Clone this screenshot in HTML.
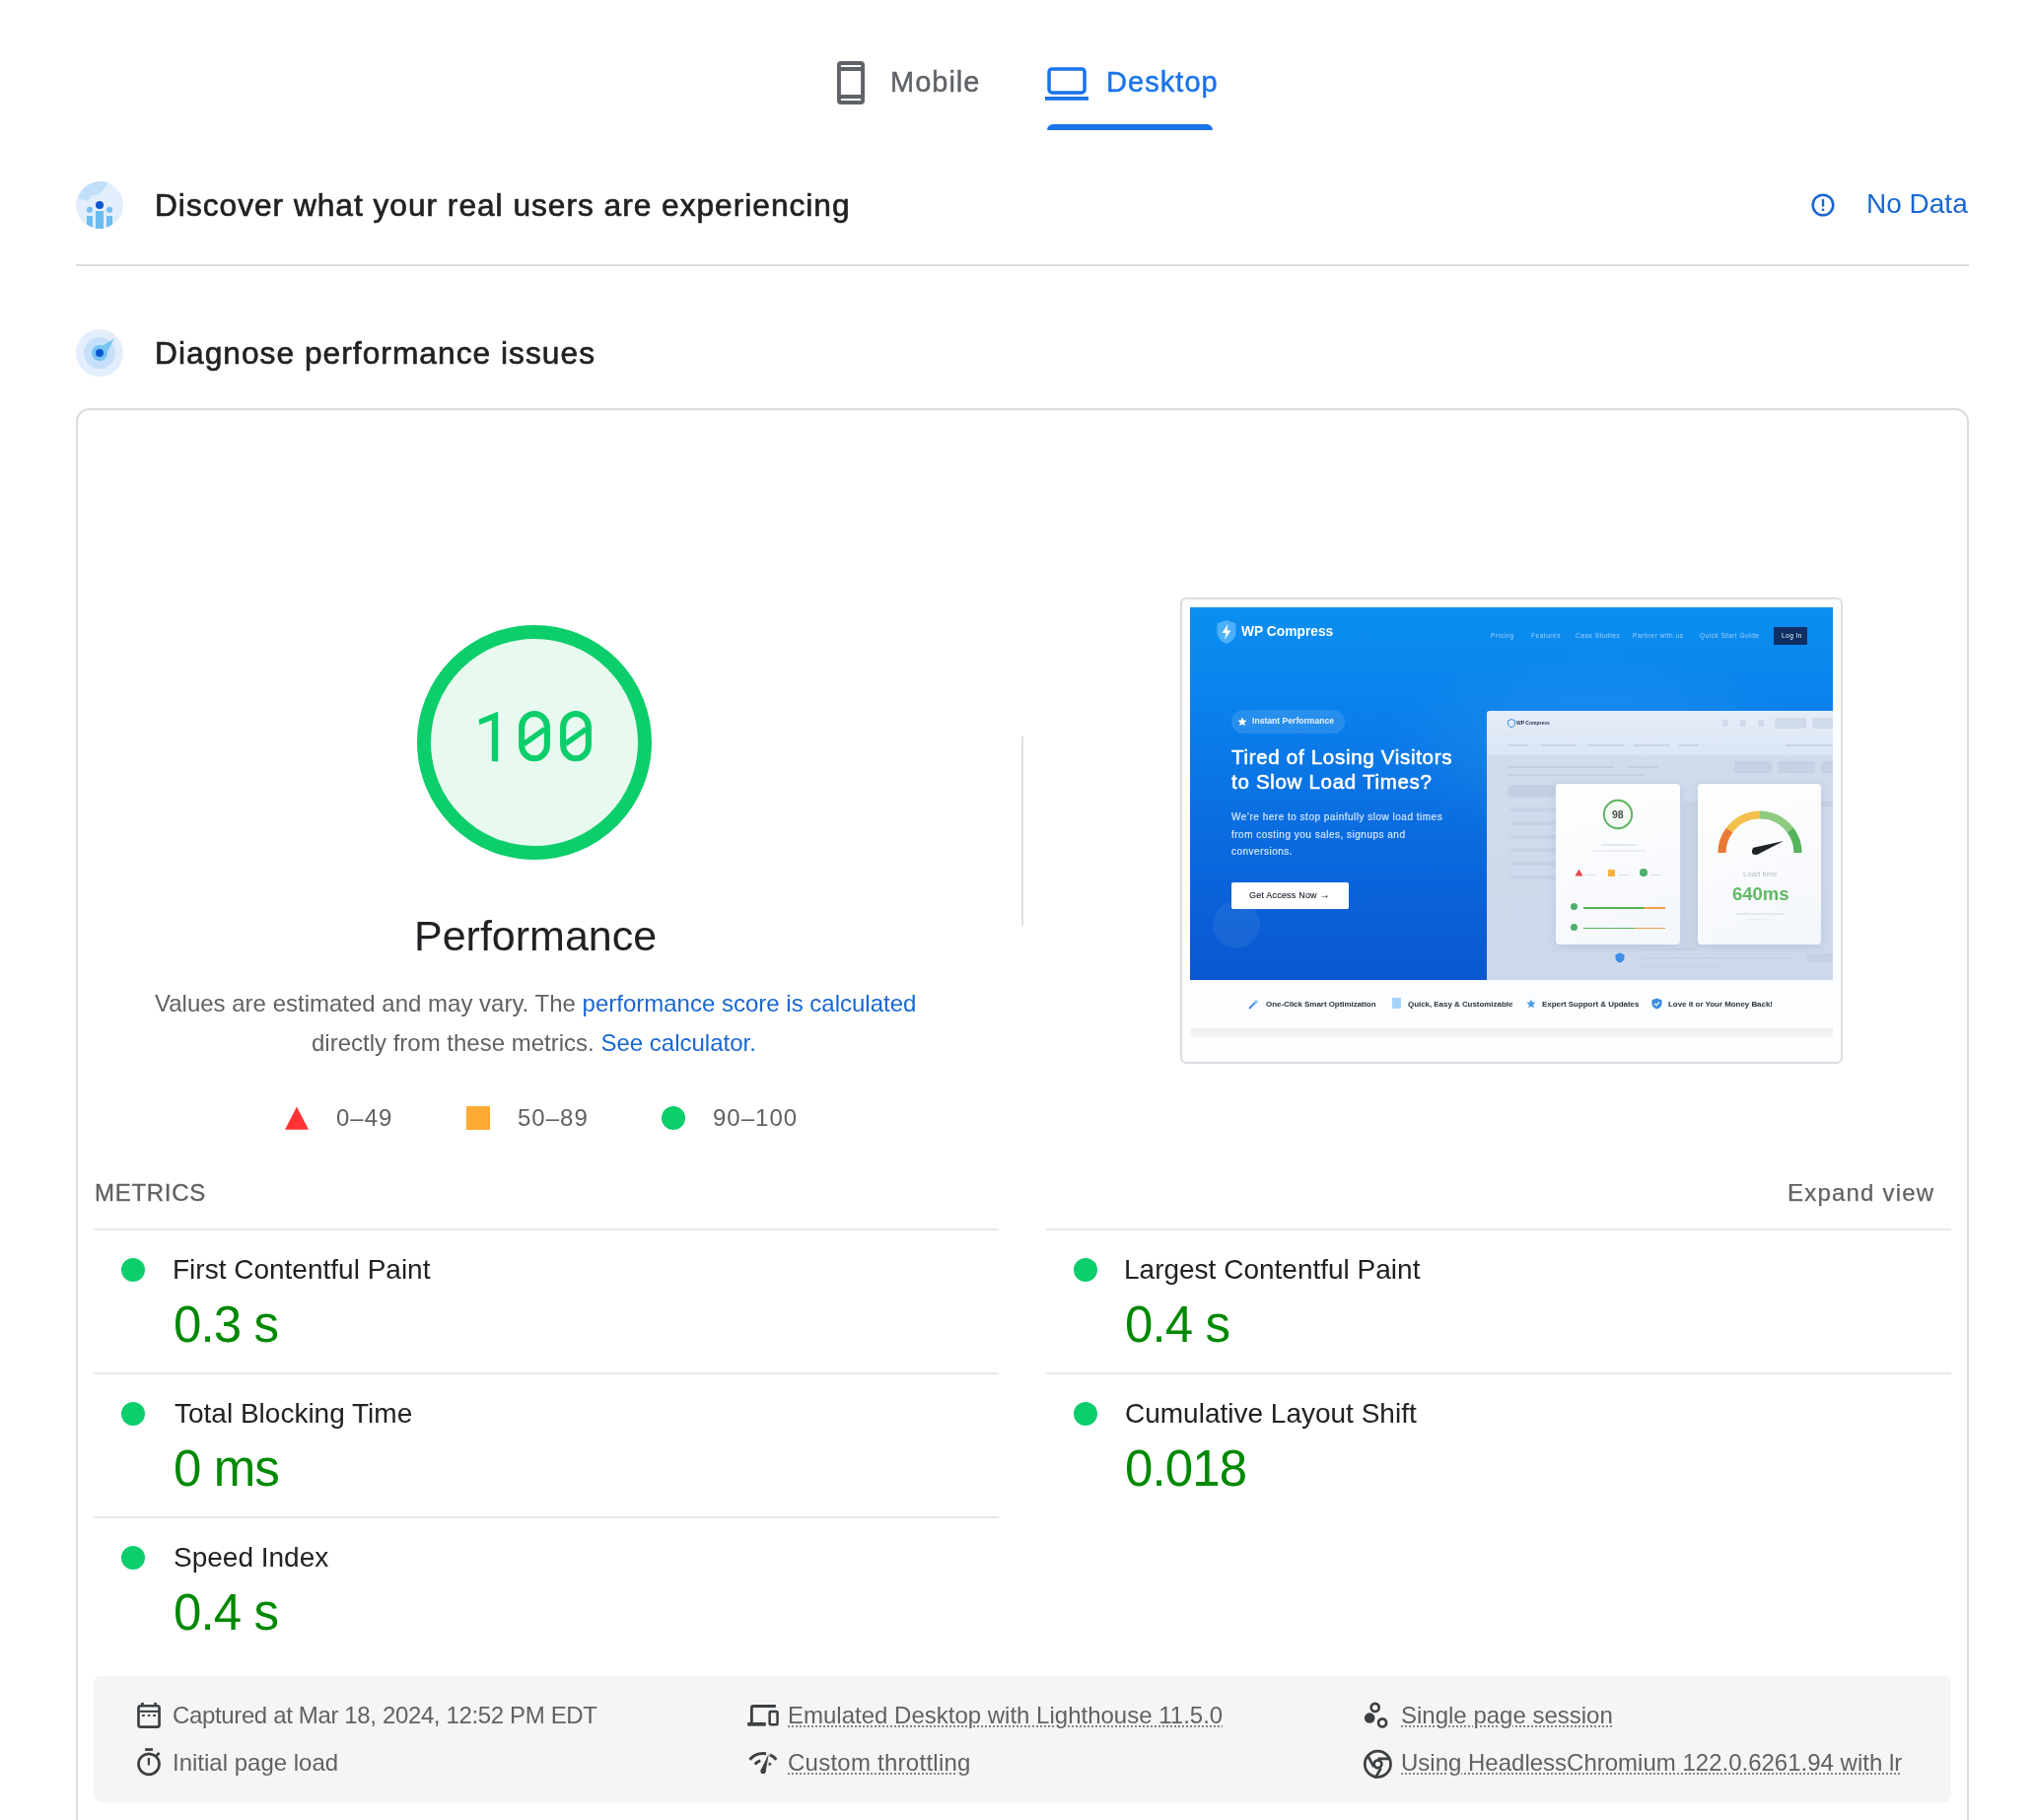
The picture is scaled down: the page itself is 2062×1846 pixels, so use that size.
<!DOCTYPE html>
<html>
<head>
<meta charset="utf-8">
<title>PageSpeed Insights</title>
<style>
html,body{margin:0;padding:0;background:#fff;}
body{width:2062px;height:1846px;position:relative;overflow:hidden;font-family:"Liberation Sans",sans-serif;}
.a{position:absolute;}
.t{position:absolute;white-space:nowrap;line-height:1;will-change:transform;}
.dot{position:absolute;width:24px;height:24px;border-radius:50%;background:#0cce6b;}
.hr{position:absolute;height:2px;background:#e8e8e8;}
.ul{text-decoration:underline dotted #858585;text-underline-offset:2px;text-decoration-thickness:2px;}
.th{position:absolute;white-space:nowrap;line-height:1;font-family:"Liberation Sans",sans-serif;will-change:transform;}
</style>
</head>
<body>
<!-- Tabs -->
<svg class="a" style="left:847px;top:60px" width="32" height="48" viewBox="0 0 32 48">
  <path fill-rule="evenodd" fill="#5f6368" d="M6 2 H26 Q30 2 30 6 V42 Q30 46 26 46 H6 Q2 46 2 42 V6 Q2 2 6 2 Z M5.9 5.9 V8 H26.1 V5.9 Z M5.9 12 V36 H26.1 V12 Z M5.9 40 V42.1 H26.1 V40 Z"/>
</svg>
<svg class="a" style="left:1058px;top:66px" width="48" height="38" viewBox="0 0 48 38">
  <rect x="6.05" y="3.95" width="36" height="24" rx="3" fill="none" stroke="#1a73e8" stroke-width="3.5"/>
  <rect x="2" y="32" width="44" height="3.8" fill="#1a73e8"/>
</svg>
<div class="a" style="left:1062px;top:126px;width:168px;height:6px;background:#1a73e8;border-radius:6px 6px 0 0;"></div>

<!-- Discover icon -->
<svg class="a" style="left:77px;top:184px" width="48" height="48" viewBox="0 0 48 48">
  <circle cx="24" cy="24" r="24" fill="#e3eefc"/>
  <path d="M2 17 A24 24 0 0 1 33 1.5 L30 6 L22 14 L16 14 L12 20 Z" fill="#c2dffa"/>
  <circle cx="24" cy="24" r="4" fill="#0b57d0"/>
  <circle cx="14" cy="28.8" r="3" fill="#70c2f2"/>
  <circle cx="34" cy="28.8" r="3" fill="#70c2f2"/>
  <path d="M20 30 h8 v18 h-8z" fill="#6bbdf0"/>
  <path d="M11 35 h6 v11.6 a24 24 0 0 1 -6 -3.2z" fill="#6bbdf0"/>
  <path d="M31 35 h6 v8.4 a24 24 0 0 1 -6 3.2z" fill="#6bbdf0"/>
</svg>
<!-- No data icon -->
<svg class="a" style="left:1836px;top:195px" width="26" height="26" viewBox="0 0 26 26">
  <circle cx="13" cy="13" r="10.3" fill="none" stroke="#1967d2" stroke-width="2.5"/>
  <rect x="11.8" y="7" width="2.4" height="7.6" fill="#1967d2"/>
  <rect x="11.8" y="16.6" width="2.4" height="2.4" fill="#1967d2"/>
</svg>
<div class="a" style="left:77px;top:268px;width:1920px;height:2px;background:#dadce0;"></div>

<!-- Diagnose icon -->
<svg class="a" style="left:77px;top:334px" width="48" height="48" viewBox="0 0 48 48">
  <circle cx="24" cy="24" r="24" fill="#e3eefc"/>
  <circle cx="24" cy="24" r="16" fill="#c6e0fb"/>
  <path d="M20 21 L38.8 9.5 L29 28 Z" fill="#74c4f2"/>
  <circle cx="24" cy="24" r="8" fill="#74c4f2"/>
  <circle cx="24" cy="24" r="4" fill="#0b57d0"/>
</svg>

<!-- Card -->
<div class="a" style="left:77px;top:414px;width:1916px;height:1600px;border:2px solid #dadce0;border-radius:14px;"></div>

<!-- Gauge -->
<svg class="a" style="left:400px;top:611px" width="284" height="284" viewBox="400 611 284 284">
  <circle cx="542" cy="753" r="112" fill="#e8f9ef" stroke="#0cce6b" stroke-width="14"/>
  <g fill="#0cce6b">
    <path d="M485.7 729.8 L503.6 722.2 L505.1 722.2 L505.1 772.2 L498.8 772.2 L498.8 730.4 L486.2 735.2 Z"/>
  </g>
  <g fill="none" stroke="#0cce6b">
    <rect x="529.1" y="724" width="25.8" height="45.3" rx="12.9" ry="13.5" stroke-width="6.1"/>
    <rect x="571.1" y="724" width="25.8" height="45.3" rx="12.9" ry="13.5" stroke-width="6.1"/>
    <path d="M531.5 754.5 L552.5 739.5 M573.5 754.5 L594.5 739.5" stroke-width="5.4"/>
  </g>
</svg>

<!-- Legend -->
<svg class="a" style="left:289px;top:1122px" width="24" height="24" viewBox="0 0 24 24"><path d="M12 0.5 L24 23.8 L0 23.8Z" fill="#ff3333"/></svg>
<div class="a" style="left:473px;top:1122px;width:24px;height:24px;background:#ffaa33;"></div>
<div class="a" style="left:671px;top:1122px;width:24px;height:24px;border-radius:50%;background:#0cce6b;"></div>

<div class="a" style="left:1036px;top:747px;width:2px;height:192px;background:#e0e0e0;"></div>

<!-- Screenshot thumbnail -->
<div class="a" style="left:1197px;top:606px;width:668px;height:469px;border:2px solid #dadce0;border-radius:6px;background:#fdfeff;"></div>
<div class="a" style="left:1207px;top:616px;width:652px;height:455px;overflow:hidden;">
  <!-- hero -->
  <div class="a" style="left:0;top:0;width:652px;height:378px;background:linear-gradient(180deg,#0b8ff0 0%,#0a82ec 25%,#0a72e3 50%,#0a63da 75%,#0a57d0 100%);"></div>
  <div class="a" style="left:200px;top:40px;width:420px;height:200px;border-radius:50%;background:radial-gradient(closest-side,rgba(120,200,255,0.18),rgba(120,200,255,0));"></div>
  <div class="a" style="left:23px;top:298px;width:48px;height:48px;border-radius:50%;background:rgba(255,255,255,0.06);"></div>
  <!-- logo -->
  <svg class="a" style="left:26px;top:12px" width="22" height="26" viewBox="0 0 22 26">
    <path d="M11 1 L20.5 4.5 V13 C20.5 19 16 23 11 25 C6 23 1.5 19 1.5 13 V4.5 Z" fill="#4db0fb"/>
    <path d="M12.5 5 L6.5 14 H10.5 L9 21 L15.5 11.5 H11.5 Z" fill="#ffffff"/>
  </svg>
  <div class="th" style="left:51.5px;top:18px;font-size:13.8px;font-weight:bold;color:#ffffff;letter-spacing:0px;">WP Compress</div>
  <!-- nav -->
  <div class="th" style="left:305px;top:26px;font-size:6.6px;color:#a3cffb;letter-spacing:0.5px;">Pricing</div>
  <div class="th" style="left:345.5px;top:26px;font-size:6.6px;color:#a3cffb;letter-spacing:0.5px;">Features</div>
  <div class="th" style="left:390.5px;top:26px;font-size:6.6px;color:#a3cffb;letter-spacing:0.5px;">Case Studies</div>
  <div class="th" style="left:449.4px;top:26px;font-size:6.6px;color:#a3cffb;letter-spacing:0.5px;">Partner with us</div>
  <div class="th" style="left:517px;top:26px;font-size:6.6px;color:#a3cffb;letter-spacing:0.5px;">Quick Start Guide</div>
  <div class="a" style="left:592px;top:20px;width:34px;height:18px;background:#0f2f62;border-radius:1px;"></div>
  <div class="th" style="left:600px;top:25.5px;font-size:6.6px;color:#e8f0ff;letter-spacing:0.4px;">Log In</div>
  <!-- pill -->
  <div class="a" style="left:42px;top:104px;width:115px;height:24px;border-radius:12px;background:rgba(255,255,255,0.12);"></div>
  <svg class="a" style="left:48px;top:111px" width="10" height="10" viewBox="0 0 10 10"><path d="M5 0.5 L6.3 3.6 L9.6 3.8 L7.1 6 L7.9 9.3 L5 7.5 L2.1 9.3 L2.9 6 L0.4 3.8 L3.7 3.6Z" fill="#fff"/></svg>
  <div class="th" style="left:62.5px;top:110.5px;font-size:8.6px;font-weight:bold;color:#eaf4ff;">Instant Performance</div>
  <!-- heading -->
  <div class="th" style="left:41.5px;top:140px;font-size:20.5px;font-weight:normal;-webkit-text-stroke:0.6px #fff;color:#ffffff;line-height:24.6px;letter-spacing:0.7px;">Tired of Losing Visitors<br>to Slow Load Times?</div>
  <div class="th" style="left:42px;top:204px;font-size:10px;color:#d7e9ff;line-height:17.6px;letter-spacing:0.5px;-webkit-text-stroke:0.15px #d7e9ff;">We’re here to stop painfully slow load times<br>from costing you sales, signups and<br>conversions.</div>
  <!-- button -->
  <div class="a" style="left:42px;top:279px;width:119px;height:27px;background:#ffffff;border-radius:2px;"></div>
  <div class="th" style="left:59.5px;top:286.5px;font-size:9px;color:#1d2433;letter-spacing:0.2px;-webkit-text-stroke:0.15px #1d2433;">Get Access Now <b style="font-size:10px">→</b></div>

  <!-- dashboard -->
  <div class="a" style="left:301px;top:105px;width:351px;height:273px;background:linear-gradient(180deg,#e5edf9 0%,#dbe5f3 16%,#d0dbec 17%,#cdd8ea 100%);border-radius:3px 0 0 0;"></div>
  <svg class="a" style="left:322px;top:113px" width="8" height="9" viewBox="0 0 8 9"><path d="M4 0.5 L7.5 2 V5 C7.5 7 6 8 4 8.7 C2 8 0.5 7 0.5 5 V2Z" fill="none" stroke="#3a8ee8" stroke-width="1"/></svg>
  <div class="th" style="left:331px;top:114.5px;font-size:5px;font-weight:bold;color:#2a3550;">WP Compress</div>
  <div class="a" style="left:539.5px;top:114px;width:6px;height:7px;background:#d1dbe9;border-radius:1px;"></div>
  <div class="a" style="left:557.5px;top:114px;width:6px;height:7px;background:#d1dbe9;border-radius:1px;"></div>
  <div class="a" style="left:575.5px;top:114px;width:6px;height:7px;background:#d1dbe9;border-radius:1px;"></div>
  <div class="a" style="left:593px;top:112px;width:32px;height:11px;background:#d0dae8;border-radius:3px;"></div>
  <div class="a" style="left:631px;top:112px;width:25px;height:11px;background:#d0dae8;border-radius:3px;"></div>
  <div class="a" style="left:323px;top:138.5px;width:20px;height:2px;background:#c9d4e4;"></div>
  <div class="a" style="left:356px;top:138.5px;width:36px;height:2px;background:#c9d4e4;"></div>
  <div class="a" style="left:403px;top:138.5px;width:37px;height:2px;background:#c9d4e4;"></div>
  <div class="a" style="left:450px;top:138.5px;width:36px;height:2px;background:#c9d4e4;"></div>
  <div class="a" style="left:496px;top:138.5px;width:20px;height:2px;background:#c9d4e4;"></div>
  <div class="a" style="left:604px;top:138.5px;width:48px;height:2px;background:#c9d4e4;"></div>
  <div class="a" style="left:323px;top:161px;width:107px;height:2px;background:#c3cfe1;"></div>
  <div class="a" style="left:445px;top:161px;width:30px;height:2px;background:#c3cfe1;"></div>
  <div class="a" style="left:323px;top:169px;width:137px;height:2px;background:#c3cfe1;"></div>
  <div class="a" style="left:552px;top:156px;width:38px;height:12px;background:#c6d2e4;border-radius:2px;"></div>
  <div class="a" style="left:596px;top:156px;width:38px;height:12px;background:#c6d2e4;border-radius:2px;"></div>
  <div class="a" style="left:640px;top:156px;width:14px;height:12px;background:#c6d2e4;border-radius:2px;"></div>
  <div class="a" style="left:322px;top:180px;width:50px;height:13px;background:#c3cfe1;border-radius:6px;"></div>
  <div class="a" style="left:325px;top:203px;width:47px;height:4px;background:#c6d2e4;border-radius:2px;"></div>
  <div class="a" style="left:325px;top:217px;width:47px;height:4px;background:#c6d2e4;border-radius:2px;"></div>
  <div class="a" style="left:325px;top:231px;width:47px;height:4px;background:#c6d2e4;border-radius:2px;"></div>
  <div class="a" style="left:325px;top:244px;width:47px;height:4px;background:#c6d2e4;border-radius:2px;"></div>
  <div class="a" style="left:325px;top:258px;width:47px;height:4px;background:#c6d2e4;border-radius:2px;"></div>
  <div class="a" style="left:325px;top:272px;width:47px;height:4px;background:#c6d2e4;border-radius:2px;"></div>
  <div class="a" style="left:500px;top:197px;width:16px;height:150px;background:#c9d4e5;"></div>
  <div class="a" style="left:641px;top:197px;width:11px;height:5px;background:#c3cfe1;"></div>
  <!-- card 1 -->
  <div class="a" style="left:371px;top:179px;width:126px;height:163px;background:linear-gradient(160deg,#ffffff,#f3f6fb);border-radius:4px;box-shadow:0 2px 8px rgba(90,110,150,0.18);"></div>
  <svg class="a" style="left:414px;top:190px" width="40" height="40" viewBox="0 0 40 40">
    <circle cx="20" cy="20" r="14.2" fill="#f4faf4" stroke="#5ab45c" stroke-width="1.9"/>
  </svg>
  <div class="th" style="left:427.5px;top:205px;font-size:10.5px;font-weight:bold;color:#4a4f4a;">98</div>
  <div class="a" style="left:417px;top:240px;width:36px;height:2px;background:#e3e7ee;"></div>
  <div class="a" style="left:408px;top:246px;width:54px;height:1.5px;background:#eceff4;"></div>
  <svg class="a" style="left:390px;top:265px" width="9" height="8" viewBox="0 0 9 8"><path d="M4.5 0.5 L8.5 7.5 H0.5Z" fill="#e5484d"/></svg>
  <div class="a" style="left:401px;top:271px;width:11px;height:1px;background:#dde2ea;"></div>
  <div class="a" style="left:423.5px;top:265.5px;width:7px;height:7px;background:#f5b240;"></div>
  <div class="a" style="left:434px;top:271px;width:11px;height:1px;background:#dde2ea;"></div>
  <div class="a" style="left:456px;top:265px;width:7.5px;height:7.5px;border-radius:50%;background:#4caf6a;"></div>
  <div class="a" style="left:467px;top:271px;width:11px;height:1px;background:#dde2ea;"></div>
  <div class="a" style="left:386px;top:300px;width:7px;height:7px;border-radius:50%;background:#4caf6a;"></div>
  <div class="a" style="left:399px;top:304px;width:61px;height:1.6px;background:#55b257;"></div>
  <div class="a" style="left:460px;top:304px;width:22px;height:1.6px;background:#f0a24a;"></div>
  <div class="a" style="left:386px;top:320.5px;width:7px;height:7px;border-radius:50%;background:#4caf6a;"></div>
  <div class="a" style="left:399px;top:324.5px;width:52px;height:1.6px;background:#55b257;"></div>
  <div class="a" style="left:451px;top:324.5px;width:31px;height:1.6px;background:#f0a24a;"></div>
  <!-- card 2 -->
  <div class="a" style="left:515px;top:179px;width:125px;height:163px;background:linear-gradient(160deg,#ffffff,#f3f6fb);border-radius:4px;box-shadow:0 2px 8px rgba(90,110,150,0.18);"></div>
  <svg class="a" style="left:530px;top:200px" width="96" height="56" viewBox="0 0 96 56">
    <g fill="none" stroke-width="8.2">
      <path d="M9.5 49 A38.5 38.5 0 0 1 17.22 25.89" stroke="#ea7a36"/>
      <path d="M17.22 25.89 A38.5 38.5 0 0 1 48 10.5" stroke="#f2c04a"/>
      <path d="M48 10.5 A38.5 38.5 0 0 1 78.78 25.89" stroke="#8fcb80"/>
      <path d="M78.78 25.89 A38.5 38.5 0 0 1 86.5 49" stroke="#55b45a"/>
    </g>
    <path d="M40.5 44 L72 37 L46 50.5 Z" fill="#1f2226"/>
    <circle cx="43.5" cy="47.5" r="3.6" fill="#1f2226"/>
  </svg>
  <div class="th" style="left:561px;top:267px;font-size:7.8px;color:#b6bac2;">Load time</div>
  <div class="th" style="left:549.5px;top:281.5px;font-size:18.5px;font-weight:bold;color:#62b866;">640ms</div>
  <div class="a" style="left:553px;top:310px;width:50px;height:1.6px;background:#e4e8ee;"></div>
  <div class="a" style="left:566px;top:316px;width:23px;height:1.2px;background:#e9ecf1;"></div>
  <!-- bottom of dashboard -->
  <svg class="a" style="left:431px;top:350px" width="10" height="11" viewBox="0 0 10 11"><path d="M5 0.5 L9.5 2.2 V5.5 C9.5 8 7.5 9.7 5 10.5 C2.5 9.7 0.5 8 0.5 5.5 V2.2Z" fill="#3a8ee8"/></svg>
  <div class="a" style="left:458px;top:346px;width:56px;height:2px;background:#c3cfe1;"></div>
  <div class="a" style="left:458px;top:355px;width:152px;height:2px;background:#c6d2e4;"></div>
  <div class="a" style="left:458px;top:363px;width:81px;height:1.5px;background:#c9d4e5;"></div>
  <div class="a" style="left:625px;top:351px;width:30px;height:10px;background:#c6d2e4;border-radius:3px;"></div>
  <!-- feature strip -->
  <div class="a" style="left:0;top:378px;width:652px;height:50px;background:#fbfdff;"></div>
  <svg class="a" style="left:59px;top:397px" width="11" height="11" viewBox="0 0 11 11"><path d="M1 10 L8.5 2.5" stroke="#4a90e2" stroke-width="2"/><path d="M8 0.5 L9 2 L10.5 3 L9 4 L8 5.5 L7 4 L5.5 3 L7 2Z" fill="#8fc6ff"/></svg>
  <div class="th" style="left:76.5px;top:399px;font-size:8px;font-weight:bold;color:#2e343c;letter-spacing:-0.05px;">One-Click Smart Optimization</div>
  <div class="a" style="left:205px;top:396px;width:9px;height:11px;background:#a5d4fb;border-radius:1px;"></div>
  <div class="th" style="left:221.3px;top:399px;font-size:8px;font-weight:bold;color:#2e343c;letter-spacing:-0.05px;">Quick, Easy &amp; Customizable</div>
  <svg class="a" style="left:341px;top:397px" width="10" height="10" viewBox="0 0 10 10"><path d="M5 0.5 L6.3 3.6 L9.6 3.8 L7.1 6 L7.9 9.3 L5 7.5 L2.1 9.3 L2.9 6 L0.4 3.8 L3.7 3.6Z" fill="#4a9ae8"/></svg>
  <div class="th" style="left:357.3px;top:399px;font-size:8px;font-weight:bold;color:#2e343c;letter-spacing:-0.05px;">Expert Support &amp; Updates</div>
  <svg class="a" style="left:468px;top:396px" width="11" height="12" viewBox="0 0 11 12"><path d="M5.5 0.5 L10.5 2.3 V6 C10.5 8.8 8.3 10.7 5.5 11.5 C2.7 10.7 0.5 8.8 0.5 6 V2.3Z" fill="#3d8fe0"/><path d="M3.2 6 L5 7.6 L8 4.4" stroke="#fff" stroke-width="1.2" fill="none"/></svg>
  <div class="th" style="left:485.2px;top:399px;font-size:8px;font-weight:bold;color:#2e343c;letter-spacing:-0.05px;">Love it or Your Money Back!</div>
  <div class="a" style="left:1px;top:427px;width:651px;height:9px;background:linear-gradient(180deg,#ebedef,#f5f6f7);"></div>
</div>


<!-- Metrics dividers -->
<div class="hr" style="left:95px;top:1246px;width:918px;"></div>
<div class="hr" style="left:1061px;top:1246px;width:918px;"></div>
<div class="hr" style="left:95px;top:1392px;width:918px;"></div>
<div class="hr" style="left:1061px;top:1392px;width:918px;"></div>
<div class="hr" style="left:95px;top:1538px;width:918px;"></div>
<div class="dot" style="left:123px;top:1276px;"></div>
<div class="dot" style="left:1089px;top:1276px;"></div>
<div class="dot" style="left:123px;top:1422px;"></div>
<div class="dot" style="left:1089px;top:1422px;"></div>
<div class="dot" style="left:123px;top:1568px;"></div>

<!-- Footer -->
<div class="a" style="left:95px;top:1700px;width:1884px;height:128px;background:#f5f5f5;border-radius:8px;"></div>
<!-- calendar -->
<svg class="a" style="left:136px;top:1724px" width="30" height="32" viewBox="0 0 30 32">
  <rect x="4.5" y="6.25" width="21.05" height="21.3" rx="2" fill="none" stroke="#3c4043" stroke-width="2.7"/>
  <rect x="4" y="10.8" width="22" height="2.1" fill="#3c4043"/>
  <rect x="7.1" y="2.9" width="2.7" height="3" fill="#3c4043"/>
  <rect x="20.2" y="2.9" width="2.7" height="3" fill="#3c4043"/>
  <rect x="8.1" y="15" width="2.7" height="2" fill="#3c4043"/>
  <rect x="13.8" y="15" width="2.5" height="2" fill="#3c4043"/>
  <rect x="19.2" y="15" width="2.7" height="2" fill="#3c4043"/>
</svg>
<!-- timer -->
<svg class="a" style="left:136px;top:1770px" width="30" height="34" viewBox="0 0 30 34">
  <circle cx="15" cy="19.3" r="10.5" fill="none" stroke="#3c4043" stroke-width="2.7"/>
  <rect x="11.1" y="3.2" width="7.9" height="2.7" fill="#3c4043"/>
  <rect x="13.8" y="13" width="2.2" height="7.5" fill="#3c4043"/>
  <path d="M22.3 11.2 L25.6 7.9" stroke="#3c4043" stroke-width="2.7"/>
</svg>
<!-- devices -->
<svg class="a" style="left:756px;top:1726px" width="36" height="28" viewBox="0 0 36 28">
  <path d="M6.4 22 V6 Q6.4 4.5 8 4.5 H30.8" stroke="#3c4043" stroke-width="2.8" fill="none"/>
  <rect x="2.2" y="21" width="18.5" height="3.7" fill="#3c4043"/>
  <rect x="24.65" y="10.05" width="7.9" height="13.1" rx="1" fill="none" stroke="#3c4043" stroke-width="2.5"/>
</svg>
<!-- throttling -->
<svg class="a" style="left:757px;top:1775px" width="34" height="28" viewBox="0 0 34 28">
  <path d="M3.54 9.82 A17.5 17.5 0 0 1 20.04 3.77" fill="none" stroke="#3c4043" stroke-width="3"/>
  <path d="M23.84 4.89 A17.5 17.5 0 0 1 30.35 9.68" fill="none" stroke="#3c4043" stroke-width="3"/>
  <path d="M8.73 14.53 A10.5 10.5 0 0 1 14.28 10.86" fill="none" stroke="#3c4043" stroke-width="3"/>
  <path d="M22.7 12.3 L26.1 14.2 L22.7 16.2Z" fill="#3c4043"/>
  <path d="M22.9 3.6 L19.6 22 L14.6 20.6 Z" fill="#3c4043"/>
  <circle cx="17" cy="21.4" r="2.6" fill="#3c4043"/>
</svg>
<!-- session -->
<svg class="a" style="left:1381px;top:1724px" width="30" height="32" viewBox="0 0 30 32">
  <circle cx="13.7" cy="7.9" r="4" fill="none" stroke="#3c4043" stroke-width="2.7"/>
  <circle cx="8.2" cy="18.5" r="5.3" fill="#3c4043"/>
  <circle cx="21.1" cy="23.4" r="4" fill="none" stroke="#3c4043" stroke-width="2.7"/>
</svg>
<!-- chrome -->
<svg class="a" style="left:1381px;top:1773px" width="32" height="32" viewBox="0 0 32 32">
  <circle cx="16.4" cy="16.3" r="13.1" fill="none" stroke="#3c4043" stroke-width="2.7"/>
  <circle cx="16.5" cy="16.2" r="3.85" fill="none" stroke="#3c4043" stroke-width="2.7"/>
  <path d="M16.5 10.9 H29.2 M6.3 7.9 L12.4 19 M19.6 20.4 L13.9 30.6" stroke="#3c4043" stroke-width="2.7" fill="none"/>
</svg>

<div class="t" id="mobile" style="left:903.0px;top:68.5px;font-size:29px;color:#5f6368;letter-spacing:1px;-webkit-text-stroke:0.45px #5f6368;">Mobile</div>
<div class="t" id="desktop" style="left:1122.0px;top:68.5px;font-size:29px;color:#1a73e8;letter-spacing:1.05px;-webkit-text-stroke:0.45px #1a73e8;">Desktop</div>
<div class="t" id="discover" style="left:157.4px;top:193.2px;font-size:31.7px;color:#202124;letter-spacing:0.98px;-webkit-text-stroke:0.65px #202124;">Discover what your real users are experiencing</div>
<div class="t" id="nodata" style="left:1893.0px;top:192.5px;font-size:28px;color:#1967d2;">No Data</div>
<div class="t" id="diagnose" style="left:157.4px;top:343.1px;font-size:31.7px;color:#202124;letter-spacing:1.03px;-webkit-text-stroke:0.65px #202124;">Diagnose performance issues</div>
<div class="t" id="perf" style="left:420.0px;top:927.5px;font-size:43px;color:#202124;">Performance</div>
<div class="t" id="desc1" style="left:156.6px;top:1005.5px;font-size:24px;color:#616161;">Values are estimated and may vary. The <span style="color:#1967d2">performance score is calculated</span></div>
<div class="t" id="desc2" style="left:316.1px;top:1045.5px;font-size:24px;color:#616161;">directly from these metrics. <span style="color:#1967d2">See calculator.</span></div>
<div class="t" id="lg1" style="left:341.0px;top:1121.5px;font-size:24px;color:#616161;letter-spacing:1px;">0–49</div>
<div class="t" id="lg2" style="left:525.0px;top:1121.5px;font-size:24px;color:#616161;letter-spacing:1px;">50–89</div>
<div class="t" id="lg3" style="left:722.7px;top:1121.5px;font-size:24px;color:#616161;letter-spacing:1px;">90–100</div>
<div class="t" id="metrics" style="left:95.7px;top:1197.5px;font-size:24px;color:#616161;letter-spacing:0.7px;-webkit-text-stroke:0.35px #616161;">METRICS</div>
<div class="t" id="expand" style="left:1813.3px;top:1197.5px;font-size:24px;color:#616161;letter-spacing:1.2px;-webkit-text-stroke:0.25px #616161;">Expand view</div>
<div class="t" id="fcpL" style="left:174.9px;top:1273.5px;font-size:28px;color:#202124;">First Contentful Paint</div>
<div class="t" id="fcpV" style="left:175.7px;top:1318.0px;font-size:51px;color:#008800;letter-spacing:-0.9px;">0.3 s</div>
<div class="t" id="lcpL" style="left:1140.0px;top:1273.5px;font-size:28px;color:#202124;">Largest Contentful Paint</div>
<div class="t" id="lcpV" style="left:1140.5px;top:1318.0px;font-size:51px;color:#008800;letter-spacing:-0.9px;">0.4 s</div>
<div class="t" id="tbtL" style="left:176.9px;top:1419.5px;font-size:28px;color:#202124;">Total Blocking Time</div>
<div class="t" id="tbtV" style="left:175.7px;top:1464.0px;font-size:51px;color:#008800;letter-spacing:-0.9px;">0 ms</div>
<div class="t" id="clsL" style="left:1141.0px;top:1419.5px;font-size:28px;color:#202124;">Cumulative Layout Shift</div>
<div class="t" id="clsV" style="left:1140.5px;top:1464.0px;font-size:51px;color:#008800;letter-spacing:-0.9px;">0.018</div>
<div class="t" id="siL" style="left:175.9px;top:1565.5px;font-size:28px;color:#202124;">Speed Index</div>
<div class="t" id="siV" style="left:175.7px;top:1610.0px;font-size:51px;color:#008800;letter-spacing:-0.9px;">0.4 s</div>
<div class="t" id="f1" style="left:175.4px;top:1727.5px;font-size:24px;color:#616161;letter-spacing:-0.36px;">Captured at Mar 18, 2024, 12:52 PM EDT</div>
<div class="t" id="f2" style="left:174.7px;top:1775.5px;font-size:24px;color:#616161;">Initial page load</div>
<div class="t" id="f3" style="left:798.6px;top:1727.5px;font-size:24px;color:#616161;"><span class="ul">Emulated Desktop with Lighthouse 11.5.0</span></div>
<div class="t" id="f4" style="left:798.6px;top:1775.5px;font-size:24px;color:#616161;letter-spacing:0.25px;"><span class="ul">Custom throttling</span></div>
<div class="t" id="f5" style="left:1420.7px;top:1727.5px;font-size:24px;color:#616161;"><span class="ul">Single page session</span></div>
<div class="t" id="f6" style="left:1420.7px;top:1775.5px;font-size:24px;color:#616161;"><span class="ul">Using HeadlessChromium 122.0.6261.94 with lr</span></div>

</body>
</html>
